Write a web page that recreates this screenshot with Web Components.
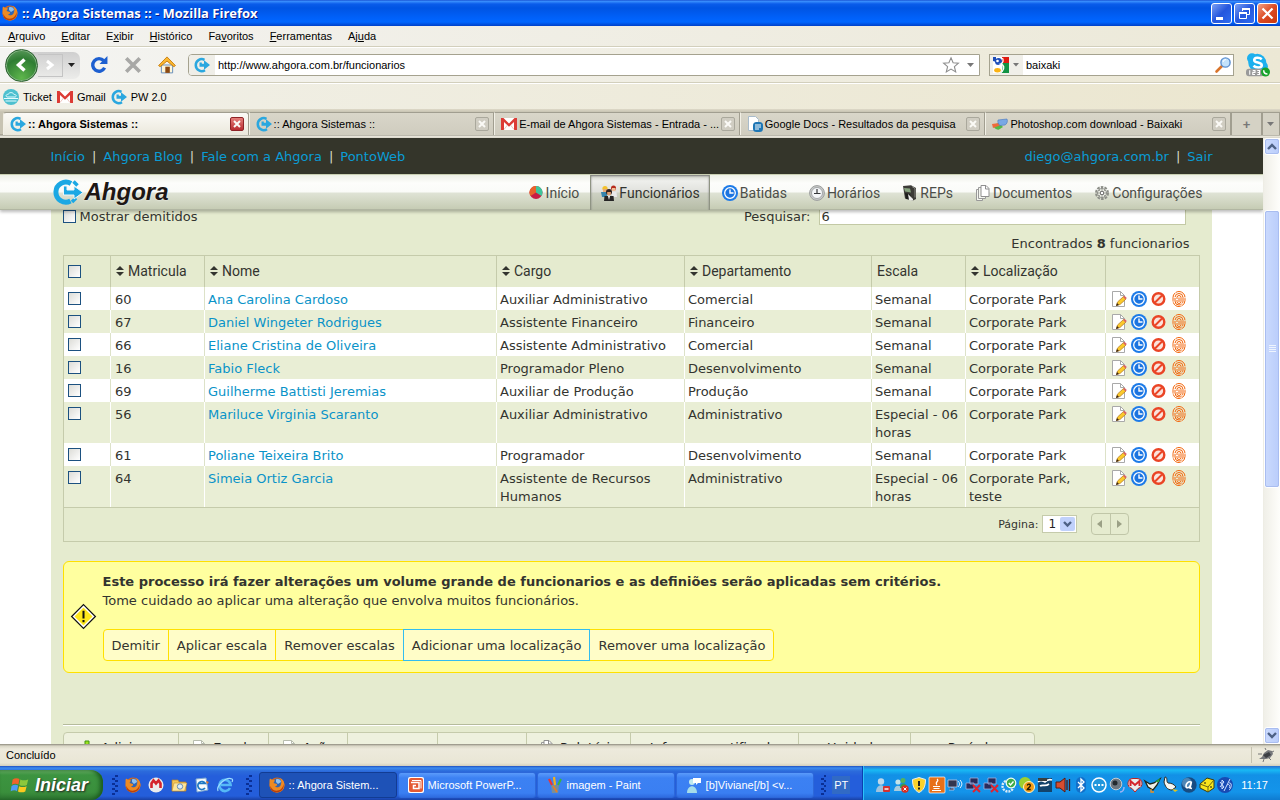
<!DOCTYPE html>
<html lang="pt-BR">
<head>
<meta charset="utf-8">
<title>:: Ahgora Sistemas ::</title>
<style>
html,body{height:100%;margin:0}
body{overflow:hidden;font-family:"Liberation Sans",Arial,sans-serif;font-size:11px;color:#000}
</style>
</head>
<body>
<desktop-screen></desktop-screen>
<script>
const ICONS = {
firefox:`<circle cx="8" cy="8" r="7.500" fill="#d9661a"/><circle cx="8.500" cy="6" r="4.600" fill="#2f66b5"/><path d="M7 2.500c2-1 5 0 5 2.500l-3 2-2-2z" fill="#8fc1ee"/><path d="M1 1.500c1.500 1.500 3 1 5 2L4.500 6 8 7c.5 2-1 2-2 2.500 2 2 5.500 1 6-2.500C13 4.500 12 2.500 10.500 1c3.500 1 5 4 4.900 7.300C15.200 12.500 12 15.500 8 15.500S.600 12.500.600 8C.600 5 .300 3 1 1.500z" fill="#ee8a22"/><path d="M1.500 9c1 4 5 5.500 8.500 4.300 2-.7 4.500-3.500 4.500-6.300 1 4-2 8.300-6.500 8.300S.500 12.500 1.500 9z" fill="#b9400d"/>`,
ahgora:`<path d="M11 13.200A6 6 0 1 1 10.500 2.800" fill="none" stroke="#2aa7df" stroke-width="2.500"/><path d="M5.500 5.500v4.300H10v3l6-4.800-6-4.800v3.500H7.800V5.500z" fill="#2aa7df"/>`,
ticket:`<circle cx="8" cy="8" r="8" fill="#4dc0cf"/><path d="M4 8c-2-1-.5-3 1.200-2.600C6 3 10 3 11 5.500c2-.3 3 1.500 1.300 2.500zM1 9.500h14M2.500 12h11" fill="none" stroke="#e4fbff" stroke-width="1"/>`,
gmail:`<path d="M0 2h16v12H0z" fill="#fff"/><path d="M0 14V2h2.500L8 7.500 13.500 2H16v12h-3V6L8 10.800 3 6v8z" fill="#dc3b35"/><path d="M3 13.500L6.500 9M13 13.500L9.500 9" stroke="#e8aaa4" stroke-width=".7"/>`,
docs:`<path d="M1.500.5h7l3 3v11h-10z" fill="#fff" stroke="#a9bccb"/><rect x="6" y="6" width="10" height="10" rx="3.500" fill="#1d76b5"/><path d="M8 9h6M8 11h6M8 13h4" stroke="#fff"/>`,
baixaki:`<path d="M1 9l6-2 4 4-4 2.500c-2 .8-5-1-6-4.500z" fill="#54b948"/><path d="M0 8l7-1 2 2-8 3z" fill="#ef6a3a"/><path d="M6 4l9-1c1 2 0 5-2 6l-5 .5C6 8 5.500 6 6 4z" fill="#79a8e4" stroke="#4877c0" stroke-width=".6"/>`,
reload:`<path d="M13 10.500A5.600 5.600 0 1 1 12.200 4.200" fill="none" stroke="#1d5fd0" stroke-width="3"/><path d="M15.500 0v7H8.500l2.500-2.500z" fill="#1d5fd0"/>`,
stop:`<path d="M2 2l12 12M14 2L2 14" stroke="#a8a8a6" stroke-width="3.200"/>`,
home:`<path d="M3 8h10v7H3z" fill="#fff6d8" stroke="#5b87b8" stroke-width=".8"/><path d="M6.500 9.500h4V15h-4z" fill="#8c4a12"/><path d="M8 .8l7.500 7.700-1.400 1L8 4.500 1.900 9.500.5 8.500z" fill="#fcb830" stroke="#c47a0c" stroke-width=".8"/>`,
star:`<path d="M8 .8l2.100 5 5.300.4-4 3.500 1.300 5.200L8 12.100l-4.700 2.800 1.300-5.200-4-3.500 5.300-.4z" fill="#fff" stroke="#8e8e8e" stroke-width="1.100"/>`,
google:`<path d="M0 0h16v16H0z" fill="#fff"/><path d="M9 0h7v6H9z" fill="#e01a10"/><path d="M9 6h7v10H7c3-2 3-6 2-10z" fill="#129344"/><path d="M0 0h3v5L0 4z" fill="#1c4cb8"/><circle cx="5.500" cy="4.500" r="3.500" fill="#1c4cb8"/><circle cx="4.500" cy="4" r="1.300" fill="#fff"/><path d="M9.500 1c1 2 1 5-2 6 4 1 4 4 2 7l-2 2" fill="none" stroke="#fff" stroke-width="1.300"/><ellipse cx="4.500" cy="13.300" rx="3.300" ry="2.200" fill="#fbb314"/>`,
lens:`<path d="M1.500 14.500L7 9" stroke="#d9742b" stroke-width="2.600" stroke-linecap="round"/><circle cx="10.500" cy="5.500" r="4.600" fill="#c3e2fb" stroke="#5b8fd0" stroke-width="1.400"/><path d="M8 5a3 3 0 0 1 3-2.500" stroke="#fff" fill="none"/>`,
skype:`<circle cx="7.500" cy="6.500" r="6" fill="#1db0ee"/><circle cx="4" cy="3.500" r="3.300" fill="#1db0ee"/><circle cx="11" cy="9" r="3.600" fill="#1db0ee"/><path d="M10.500 4.200C9 2.800 5.500 2.800 5.500 4.800c0 2 5 1.200 5 3.300 0 1.900-3.800 2-5.500.4" fill="none" stroke="#fff" stroke-width="1.700"/><rect x="0" y="10.500" width="12" height="5" rx="2" fill="#9a9a9a"/><path d="M2.500 11.500v3M4.500 11.700h1.500v1.200H4.500v1.400H6M7.500 11.700H9v2.600H7.500M7.700 13H9" stroke="#fff" stroke-width=".7" fill="none"/><circle cx="13" cy="12.700" r="3" fill="#18a22b"/><path d="M11.800 11.500c0 1.500 1 2.500 2.500 2.500" stroke="#fff" fill="none"/>`,
pie:`<circle cx="8" cy="7.500" r="6.500" fill="#c81d45"/><path d="M8 7.500V1A6.500 6.500 0 0 0 2.500 11z" fill="#e8622a"/><path d="M8 7.500V1a6.500 6.500 0 0 1 5.500 10z" fill="#3fc49a"/>`,
people:`<circle cx="4" cy="3.500" r="2.600" fill="#f3c12c"/><path d="M2 4h4v3H2z" fill="#e8a87a"/><path d="M0 7h6v5H1z" fill="#3585ae"/><circle cx="12.500" cy="3" r="2.500" fill="#b62b1c"/><path d="M11 3h3.500v3H11z" fill="#f0bd95"/><path d="M10 7h5.500l.5 5h-5z" fill="#e9e9e9"/><circle cx="8" cy="7" r="3" fill="#32221c"/><path d="M6.200 7h3.700v3H6.200z" fill="#dd9e72"/><path d="M3.500 11h9l.5 5H3z" fill="#252525"/><path d="M7 11h2l-1 4z" fill="#fff"/>`,
clock:`<circle cx="8" cy="8" r="8" fill="#1d7be8"/><circle cx="8" cy="8" r="5.300" fill="#1b74e0" stroke="#fff" stroke-width="1.300"/><path d="M8 4.500V8h3.500" fill="none" stroke="#fff" stroke-width="1.400"/>`,
watch:`<circle cx="8" cy="8" r="7.400" fill="#c9cbca" stroke="#9b9d9d"/><circle cx="8" cy="8" r="5.500" fill="#f4f6f8" stroke="#96999c" stroke-width=".8"/><path d="M8 4v4.500h3.500M5 8.500h3" fill="none" stroke="#35383b" stroke-width="1.200"/>`,
rep:`<path d="M1 1l8-.7L14 3v11l-3 1.500-8-2z" fill="#3c3b37"/><path d="M2 3l6 .5 1 4-6-1z" fill="#87a37f"/><path d="M3 8l5 1 2 6-6-1z" fill="#1c1c1b"/><path d="M6 9l5 5v1.500L7 15z" fill="#eee"/><path d="M10 1.500l3 2v9" stroke="#8b8b85" fill="none"/>`,
pages:`<path d="M1.500 4.500h6v11h-6z" fill="#f4f6ef" stroke="#999"/><path d="M3.500 2.500h7v11h-7z" fill="#f4f6ef" stroke="#999"/><path d="M6 .5h5l3 3v8H6z" fill="#fff" stroke="#8f8f8f"/><path d="M10.500.5v3.500H14" fill="none" stroke="#8f8f8f"/>`,
gear:`<circle cx="8" cy="8" r="6" fill="none" stroke="#8d8f88" stroke-width="2" stroke-dasharray="2.600 1.160"/><circle cx="8" cy="8" r="4.500" fill="#eef0e8" stroke="#8b8d87"/><path d="M8 3.500v9M3.500 8h9M5 5l6 6M11 5l-6 6" stroke="#8b8d86" stroke-width=".8"/><circle cx="8" cy="8" r="1.700" fill="#fff" stroke="#777"/>`,
edit:`<path d="M1.500.5h8l4 4v11h-12z" fill="#fff" stroke="#a9a9a9"/><path d="M9.500.5v4h4" fill="none" stroke="#a9a9a9"/><path d="M6.500 11l6-5.500L15 8l-6 5.500-3.500 1z" fill="#fbc92b" stroke="#ad751c" stroke-width=".7"/><path d="M12 6l1.500-1.300L15.800 7l-1.300 1.500z" fill="#d96464"/><path d="M5 15l1-3 2 2z" fill="#382412"/>`,
ban:`<circle cx="7.500" cy="8" r="5.800" fill="#fbe3dc" stroke="#ea4425" stroke-width="2.400"/><path d="M4 11.500l7-7" stroke="#ea4425" stroke-width="2"/>`,
finger:`<g fill="none" stroke="#f2650a" stroke-width="1"><rect x="2" y=".5" width="12" height="15" rx="6" stroke-dasharray="9 .8"/><rect x="4" y="2.500" width="8" height="11.500" rx="4" stroke-dasharray="12 .9"/><rect x="6" y="4.500" width="4" height="8" rx="2" stroke-dasharray="14 1"/><path d="M8 6.500v4.500"/></g>`,
warning:`<path d="M8 .4L15.600 8 8 15.600.4 8z" fill="#fff" stroke="#111" stroke-width=".8"/><path d="M8 2.200L13.800 8 8 13.800 2.200 8z" fill="#ffe81c"/><path d="M8 4.300v5M8 10.200v1.400" stroke="#111" stroke-width="1.300"/>`,
plus:`<path d="M6 1h4v5h5v4h-5v5H6v-5H1V6h5z" fill="#9be21c" stroke="#3f9410"/>`,
sheet:`<path d="M2.500.5h8l3 3v12h-11z" fill="#fff" stroke="#b7bcae"/><path d="M10.500.5v3h3" stroke="#b7bcae" fill="none"/>`,
bug:`<path d="M1 12l3-2 2-4 4-3 4 1 1 3-3 4-4 1z" fill="#75777a"/><path d="M5 8l6-3 2 3-5 3z" fill="#3c3f43"/><path d="M0 7h4M6 12l-1 3M11 11l2 2M14 5l2-1M8 3l-1-2" stroke="#777"/>`,
windows:`<path d="M1.500 3C3.500 1.500 6 1.700 7.500 2.700L6.600 7.500C5 6.500 2.500 6.500.700 7.800z" fill="#f0632a"/><path d="M8.300 3c2 1 4 1 7 0l-1.200 5c-2 1-4.500 1-6.700 0z" fill="#8cc83c"/><path d="M.5 8.800c2-1.200 4-1.200 5.800-.3l-1 5C4 12.500 2 12.500-.3 13.600z" fill="#4f9bf5"/><path d="M7.200 9c2 1 4.500 1 6.700 0l-1.200 4.800c-2 1-4.700 1-6.500 0z" fill="#fbc91f"/>`,
gmailnote:`<circle cx="8" cy="8" r="7.500" fill="#ececec"/><path d="M3.500 11V6.500l2-3 2.500 3 2.500-3 2 3V11" fill="none" stroke="#d4242c" stroke-width="2.600"/>`,
folder:`<path d="M1 3h6l1 2h7v9H1z" fill="#f5c756" stroke="#b9822a" stroke-width=".7"/><path d="M3 6h13l-2.500 8H1z" fill="#fde69b" stroke="#b9822a" stroke-width=".5"/><circle cx="9" cy="9.500" r="2.700" fill="#dceffd" stroke="#6a8cb2"/>`,
mail:`<path d="M2 2l10-1 2 12-11 2z" fill="#f6f9fc" stroke="#7ca6cf"/><path d="M11 11a4 4 0 1 1 .3-4.500H5" fill="none" stroke="#1d77c4" stroke-width="1.700"/><path d="M12 4l3 1-2 2z" fill="#f07a1e"/>`,
ie:`<path d="M13 11a5.600 5.600 0 1 1 .6-3H4" fill="none" stroke="#55b8f6" stroke-width="2.700"/><path d="M1 14C-1 9 9-1 15 2c1 .5.5 2 0 3" fill="none" stroke="#9bdcff" stroke-width="1.200"/>`,
ppt:`<rect width="16" height="16" rx="2" fill="#fff"/><rect x="1" y="1" width="14" height="14" rx="2" fill="#e45a33"/><path d="M3 5.500h8v6H5.500v-3H8" fill="none" stroke="#fff" stroke-width="1.500"/><path d="M4 3.500h9v8" fill="none" stroke="#fff"/>`,
paint:`<path d="M4 8h8l-1 8H5z" fill="#7a8f98"/><path d="M5 8L2 2" stroke="#e33" stroke-width="2.200"/><path d="M8 8L7 0" stroke="#f5b21a" stroke-width="2.200"/><path d="M11 8l3-6" stroke="#38b443" stroke-width="2"/><path d="M6 9l4 6" stroke="#ef7c20" stroke-width="1.500"/>`,
msn:`<circle cx="6" cy="5" r="3" fill="#bfe9ef"/><path d="M1 16c0-9 10-9 10 0z" fill="#a6dce9"/><path d="M7 1h8v5h-3l-2 2V6H7z" fill="#fff"/>`,
msnaway:`<circle cx="6" cy="4.500" r="3.200" fill="#bfd8ea"/><path d="M1 15c0-9 10-9 10 0z" fill="#9fc3de"/><rect x="8" y="9" width="7" height="6" rx="1" fill="#d23232"/><path d="M9.500 12h4" stroke="#fff" stroke-width="1.400"/>`,
buddies:`<circle cx="5" cy="5" r="2.600" fill="#c5e3e8"/><circle cx="10" cy="3.500" r="2.500" fill="#54b35c"/><path d="M1 14c0-7 8-7 8 0z" fill="#a9ccdd"/><path d="M7 11c0-6 7-6 7 0z" fill="#3b9a50"/><circle cx="12" cy="12" r="3.700" fill="#db2c1f"/><path d="M10.500 10.500l3 3M13.500 10.500l-3 3" stroke="#fff"/>`,
shield:`<path d="M8 .5l6.500 2c0 7-2 11-6.500 13C3.500 13.500 1.500 9.500 1.500 2.500z" fill="#fbd22b" stroke="#e9eef3"/><path d="M8 4v5M8 10.500v2" stroke="#222" stroke-width="2"/>`,
java:`<rect width="16" height="16" rx="1" fill="#e77018" stroke="#fff" stroke-width=".7"/><path d="M8 2c3 2-3 3 0 6M4 9.500h7M4.500 11.500h6M3 13.500h9" fill="none" stroke="#fff" stroke-width="1.200"/>`,
wifi:`<path d="M1 3h9v7H1zM4 11h3v2H2" fill="#33364d" stroke="#c0c6e1" stroke-width=".8"/><path d="M11 4c2 2 2 4 0 6M13 3c2.500 3 2.500 5 0 8" fill="none" stroke="#e5f3ff"/>`,
netoff:`<path d="M5 1h8v6H5zM1 6h8v6H1z" fill="#292c5b" stroke="#9fb0e0" stroke-width=".8"/><path d="M8 8l7 7M15 8l-7 7" stroke="#e02330" stroke-width="2"/>`,
cert:`<circle cx="7" cy="9" r="5.500" fill="none" stroke="#dcecf7" stroke-width="2.400" stroke-dasharray="2 1"/><circle cx="10" cy="6" r="4.800" fill="#3eac49" stroke="#f3fff3" stroke-width="1.200"/><path d="M7.800 6l1.700 2 3-3.500" fill="none" stroke="#fff" stroke-width="1.400"/>`,
two:`<circle cx="6" cy="6" r="6" fill="#9ed02e"/><circle cx="10" cy="10" r="5.500" fill="#f19c16" stroke="#fff3c6"/><path d="M8.300 8.500c.4-2 3.400-1.500 3 .4-.2 1-2.500 2.500-3 3.600h3.400" fill="none" stroke="#261b00" stroke-width="1.300"/>`,
oo:`<path d="M1 1h14v14H1z" fill="#13436b"/><path d="M1 5c3-3 5-1 7 0 2-2 4-3 7-2M3 9c3-2 5 1 9-2" stroke="#fff" fill="none" stroke-width="1.700"/><path d="M1 1h9v3H1z" fill="#3a3f3f"/>`,
sound:`<path d="M1 5h4l5-4v14l-5-4H1z" fill="#d64d30" stroke="#591b12"/><path d="M12 3v10M14.500 2v12" stroke="#4b1712" stroke-width="1.300"/>`,
bt:`<rect x="3" y="0" width="10" height="16" rx="5" fill="#1270ca"/><path d="M5 5l6 6-3 3V2l3 3-6 6" fill="none" stroke="#fff" stroke-width="1.300"/>`,
dots:`<circle cx="8" cy="8" r="7" fill="#2297dc" stroke="#fff" stroke-width="1.500"/><path d="M3.500 8h2M7 8h2M10.500 8h2" stroke="#fff" stroke-width="2"/>`,
speaker:`<circle cx="7" cy="7" r="5.800" fill="#6e7780" stroke="#c5ccd2"/><circle cx="6" cy="6" r="2.500" fill="#242a2f"/><path d="M11 15c3 0 4-3 4-5" fill="none" stroke="#9fb2f1" stroke-width="1.500"/>`,
bubble:`<path d="M8 15L5 11.500C-1 10 0 1.500 6 1.500h4c6 0 7 8.500 1 10z" fill="#ececec" stroke="#b22"/><path d="M3.500 9V4l4.500 4 4.500-4v5" fill="none" stroke="#d4242c" stroke-width="2"/>`,
bird:`<path d="M0 4l5 3 4-1 6-4-3 6-4 5-5-3z" fill="#eef0e8" stroke="#1c251b" stroke-width="1.300"/><path d="M10 5l5-4-1 4z" fill="#25a342"/><path d="M6 12v3l3 0" stroke="#f18f1d" fill="none" stroke-width="1.300"/>`,
goose:`<path d="M2 0c3 0 1 5 3 6 3 0 6 1 8 4l-4 3C4 13 2 9 1 5z" fill="#f5f6f2" stroke="#2a2a25"/><path d="M9 12l6 1-3 2z" fill="#e1c41b"/>`,
avast:`<circle cx="8" cy="8" r="7.700" fill="#174c82"/><circle cx="6" cy="6" r="5" fill="#4d86b6"/><path d="M10 5c-3-1-5 2-5 4s3 3 4.500-1L10.500 4.500 9 11l2 .5" fill="none" stroke="#fff" stroke-width="1.600"/>`,
cheese:`<path d="M1 7l7-6 7 2v8l-6 4-8-4z" fill="#f8e51c" stroke="#3d3a12"/><path d="M1 7l8 3 6-7M9 10v5" fill="none" stroke="#6b6512"/><circle cx="6" cy="6" r="1" fill="#655c12"/><circle cx="12" cy="10" r="1" fill="#655c12"/>`,
btw:`<circle cx="8" cy="8" r="8" fill="#174ab4"/><path d="M3 5l4 5-2 2V3l2 2-4 5M13 2L7 14M10 8c2-2 4 2 2 3M12 6c3-1 3 5 0 7" fill="none" stroke="#cfe0ff"/>`
};

function define(name, css, html) {
  const tpl = document.createElement('template');
  tpl.innerHTML = `<style>*{box-sizing:border-box}${css}</style>${html}`;
  customElements.define(name, class extends HTMLElement {
    constructor() {
      super();
      this.attachShadow({mode: 'open'}).append(tpl.content.cloneNode(true));
    }
  });
}

customElements.define('ui-icon', class extends HTMLElement {
  connectedCallback() {
    if (this.shadowRoot) return;
    const s = this.getAttribute('size') || 16;
    this.attachShadow({mode: 'open'}).innerHTML =
      `<style>:host{display:inline-block;flex:none;width:${s}px;height:${s}px}svg{display:block;width:100%;height:100%;overflow:visible}</style>
       <svg viewBox="0 0 16 16" aria-hidden="true">${ICONS[this.getAttribute('name')] || ''}</svg>`;
  }
});

/* ---------- window frame ---------- */
define('title-bar', `
:host{display:flex;align-items:center;height:26px;padding:0 2px 0 2px;gap:4px;
 background:linear-gradient(#0a3cc4 0,#3f94ff 1px,#0a5cea 4px,#0054e3 8px,#0061fa 18px,#0066ff 22px,#0040c8 26px);
 color:#fff;font:bold 13px "Open Sans","Liberation Sans",sans-serif;text-shadow:1px 1px #0a1883}
.t{flex:1;white-space:pre}
.b{display:flex;gap:2px}
button{width:21px;height:21px;padding:0;border:1px solid #fff;border-radius:3px;background:linear-gradient(135deg,#7ba0f4,#2456dd 50%,#2f6cf0)}
button.x{background:linear-gradient(135deg,#f0a085,#dc4a22 50%,#c8370e)}
svg{display:block;width:19px;height:19px}`,
`<ui-icon name="firefox"></ui-icon><span class="t">:: Ahgora Sistemas :: - Mozilla Firefox</span>
<span class="b">
<button aria-label="Minimizar"><svg><path d="M4 13h7v3H4z" fill="#fff"/></svg></button>
<button aria-label="Restaurar"><svg fill="none" stroke="#fff"><path d="M7.500 7V4.500h7v6H12"/><path d="M7 5h8" stroke-width="2"/><path d="M4.500 8.500h7v6h-7z"/><path d="M4 9h8" stroke-width="2"/></svg></button>
<button class="x" aria-label="Fechar"><svg><path d="M4.500 4.500l10 10M14.500 4.500l-10 10" stroke="#fff" stroke-width="2.200"/></svg></button>
</span>`);

define('menu-bar', `
:host{display:flex;align-items:center;gap:16px;height:21px;padding:0 8px;background:linear-gradient(90deg,#f3f2ef,#ece9d8);border-bottom:1px solid #d2cfbc}
a{color:#000;text-decoration:none}`,
`<a href="#"><u>A</u>rquivo</a><a href="#"><u>E</u>ditar</a><a href="#">E<u>x</u>ibir</a><a href="#"><u>H</u>istórico</a><a href="#">Fa<u>v</u>oritos</a><a href="#"><u>F</u>erramentas</a><a href="#">Aj<u>u</u>da</a>`);

define('nav-toolbar', `
:host{display:flex;align-items:center;height:36px;padding:0 10px 0 5px;background:linear-gradient(90deg,#f4f4f2,#ece8d5);border-top:1px solid #fff;border-bottom:1px solid #d2cfbc}
button{padding:0;border:0;background:none;display:flex;align-items:center;justify-content:center;flex:none}
.hist{display:flex;align-items:center;height:27px;width:75px;border-radius:16px 8px 8px 16px;background:linear-gradient(#cfcfcf,#ececea)}
.back{width:33px;height:33px;border-radius:50%;background:radial-gradient(circle at 50% 90%,#5eb64c,#2f7d33 60%,#68a268);border:1px solid #2c6130;box-shadow:inset 0 0 0 1px #86b486}
.fwd{width:25px;height:23px;border:1px solid #c4c4c4;border-left:0}
.drop{flex:1}
.tools{display:flex;gap:16px;margin:0 12px 0 10px}
.url{flex:1;display:flex;align-items:center;height:22px;border:1px solid #a5a28f;border-radius:4px 0 0 4px;background:#fff;overflow:hidden;padding-right:4px;gap:8px}
.id{display:flex;align-items:center;justify-content:center;align-self:stretch;width:26px;background:#efeee8}
input{flex:1;min-width:0;width:0;height:20px;border:0;padding:0;outline:0;background:transparent;font:inherit;font-size:11px;color:#000}
.url input{margin-left:-5px}
.search{display:flex;align-items:center;width:245px;height:22px;margin:0 12px 0 9px;border:1px solid #a5a28f;background:#fff;gap:3px;padding-right:2px}
.eng{width:33px;align-self:stretch;background:#f0efe9;gap:4px}`,
`<div class="hist"><button class="back" aria-label="Voltar"><svg width="18" height="18"><path d="M11.500 3.500L5.500 9l6 5.500" fill="none" stroke="#fff" stroke-width="3.500"/></svg></button>
<button class="fwd" aria-label="Avançar"><svg width="14" height="14"><path d="M4 3l5 4-5 4" fill="none" stroke="#fff" stroke-width="3"/></svg></button>
<button class="drop" aria-label="Histórico recente"><svg width="8" height="5"><path d="M0 0h7L3.500 4z" fill="#222"/></svg></button></div>
<div class="tools"><button aria-label="Atualizar"><ui-icon name="reload" size="18"></ui-icon></button><button aria-label="Parar"><ui-icon name="stop" size="18"></ui-icon></button><button aria-label="Página inicial"><ui-icon name="home" size="18"></ui-icon></button></div>
<div class="url"><span class="id"><ui-icon name="ahgora"></ui-icon></span><input aria-label="Endereço" value="http://www.ahgora.com.br/funcionarios">
<button aria-label="Favoritar"><ui-icon name="star"></ui-icon></button><button aria-label="Abrir lista"><svg width="8" height="5"><path d="M0 0h7L3.500 4z" fill="#777"/></svg></button></div>
<div class="search"><button class="eng" aria-label="Motor de busca"><ui-icon name="google"></ui-icon><svg width="7" height="4"><path d="M0 0h6L3 3.500z" fill="#777"/></svg></button><input aria-label="Buscar" value="baixaki"><button aria-label="Buscar"><ui-icon name="lens"></ui-icon></button></div>
<ui-icon name="skype" size="24"></ui-icon>`);

define('bookmark-bar', `
:host{display:flex;align-items:center;gap:5px;height:26px;padding:0 3px;background:linear-gradient(90deg,#f1f0e8,#ebe6cf);border-top:1px solid #fff}
a{display:flex;align-items:center;gap:4px;color:#000;text-decoration:none}`,
`<a href="#"><ui-icon name="ticket"></ui-icon>Ticket</a><a href="#"><ui-icon name="gmail"></ui-icon>Gmail</a><a href="#"><ui-icon name="ahgora"></ui-icon>PW 2.0</a>`);

define('browser-tab', `
:host{flex:1;min-width:0;display:flex;align-items:center;height:23px;padding:0 4px 0 6px;border:1px solid #a19e90;border-bottom:0;border-left-color:#f2f0e6;background:linear-gradient(#d9d6c9,#cfccbe)}
:host([active]){background:linear-gradient(#fbfaf6,#ebe8dc);font-weight:bold;border-radius:3px 3px 0 0}
.t{flex:1;min-width:0;white-space:nowrap;margin-left:2px}
button{flex:none;width:14px;height:14px;padding:0;border:1px solid #aaa89c;border-radius:2px;background:#d0cdc2;display:flex;align-items:center;justify-content:center}
path{stroke:#fbfaf6;stroke-width:2}
:host([active]) button{background:linear-gradient(#e57f7b,#b92b30);border-color:#8f2226}`,
`<slot name="icon"></slot><span class="t"><slot></slot></span><button aria-label="Fechar aba"><svg width="8" height="8"><path d="M1 1l6 6M7 1L1 7"/></svg></button>`);

define('tab-strip', `
:host{display:flex;align-items:flex-end;height:29px;padding:0 0 3px 3px;background:linear-gradient(#ded9c8,#c7c3b2 3px,#c7c3b2 25px,#8b887b 26px,#eceadf 27px,#d8d5c8)}
button{height:23px;padding:0;border:1px solid #a19e90;border-bottom:0;background:#d5d2c5;width:31px;color:#777;font:bold 13px "Liberation Sans",sans-serif;display:flex;align-items:center;justify-content:center}
button:last-child{width:18px}`,
`<browser-tab active><ui-icon slot="icon" name="ahgora"></ui-icon>:: Ahgora Sistemas ::</browser-tab>
<browser-tab><ui-icon slot="icon" name="ahgora"></ui-icon>:: Ahgora Sistemas ::</browser-tab>
<browser-tab><ui-icon slot="icon" name="gmail"></ui-icon>E-mail de Ahgora Sistemas - Entrada - ...</browser-tab>
<browser-tab><ui-icon slot="icon" name="docs"></ui-icon>Google Docs - Resultados da pesquisa</browser-tab>
<browser-tab><ui-icon slot="icon" name="baixaki"></ui-icon>Photoshop.com download - Baixaki</browser-tab>
<button aria-label="Nova aba">+</button><button aria-label="Listar abas"><svg width="8" height="4"><path d="M0 0h7L3.500 4z" fill="#777"/></svg></button>`);

define('scroll-bar', `
:host{display:flex;flex-direction:column;width:17px;background:linear-gradient(90deg,#f0efe8,#fefefb);border-left:1px solid #eeede5}
button,.thumb{border:1px solid #fff;border-radius:3px;outline:1px solid #a9bdf0;outline-offset:-2px;background:linear-gradient(90deg,#cbdafd,#bacdfb);padding:0;display:flex;align-items:center;justify-content:center}
button{height:17px}
.gap{flex:55}.rest{flex:240}.thumb{flex:277}`,
`<button aria-label="Rolar para cima"><svg width="10" height="7"><path d="M1 6l4-4 4 4" fill="none" stroke="#4d6185" stroke-width="2.400"/></svg></button><div class="gap"></div>
<div class="thumb"><svg width="7" height="8"><path d="M0 .5h7M0 2.500h7M0 4.500h7M0 6.500h7" stroke="#eef4fe"/></svg></div><div class="rest"></div>
<button aria-label="Rolar para baixo"><svg width="10" height="7"><path d="M1 1l4 4 4-4" fill="none" stroke="#4d6185" stroke-width="2.400"/></svg></button>`);

/* ---------- site ---------- */
define('site-top', `
:host{display:flex;justify-content:space-between;align-items:center;height:36px;padding:0 4%;background:#34352a;color:#d8d9c8}
nav{display:flex;gap:7px}
a{color:#0a9cd4;text-decoration:none}`,
`<nav><a href="#">Início</a>|<a href="#">Ahgora Blog</a>|<a href="#">Fale com a Ahgora</a>|<a href="#">PontoWeb</a></nav>
<nav><a href="#">diego@ahgora.com.br</a>|<a href="#">Sair</a></nav>`);

define('nav-item', `
:host{display:block}
a{display:flex;align-items:center;gap:2px;height:35px;padding:0 9px 0 10px;border:1px solid transparent;border-width:0 1px;color:#4c4e48;text-decoration:none;font-family:"Roboto","Liberation Sans",sans-serif;font-size:14px}
:host([active]) a{color:#33342f;border-color:#8f9484;background:linear-gradient(#cdd0c5 0,#eeefec 6px,#e0e1dc 17px,#cdd1c3 18px,#b6bca6);box-shadow:inset 0 1px 2px #777}`,
`<a href="#"><slot></slot></a>`);

define('site-header', `
:host{display:flex;justify-content:space-between;height:36px;padding:0 4%;border-top:1px solid #c9cfb2;border-bottom:1px solid #b1b6a2;
 background:linear-gradient(#edf0e6,#fdfdfb 8px,#fafbf8 17px,#dfe3d5 18px,#c6ccb4);box-shadow:0 2px 3px #0004;position:relative;z-index:1}
.logo{display:flex;align-items:center;gap:2px;color:#1d1715;text-decoration:none;font:italic bold 24px "Liberation Sans",sans-serif;text-shadow:0 0 2px #fff}
nav{display:flex;gap:1px}`,
`<a class="logo" href="#"><svg width="32" height="30" viewBox="0 0 32 30"><path d="M20 6.500A10 10 0 1 0 19.500 24" fill="none" stroke="#1ba8e4" stroke-width="5"/><path d="M22.500 4.500l4 4M25 21l-4 4" stroke="#1ba8e4" stroke-width="3.500"/><path d="M12.500 9h3.500v4h7V9l9 6.500-9 6.500v-4H12.500z" fill="#1ba8e4" stroke="#eef6f9" stroke-width="1"/></svg><span>Ahgora</span></a>
<nav><nav-item><ui-icon name="pie"></ui-icon>Início</nav-item><nav-item active><ui-icon name="people"></ui-icon>Funcionários</nav-item><nav-item><ui-icon name="clock"></ui-icon>Batidas</nav-item><nav-item><ui-icon name="watch"></ui-icon>Horários</nav-item><nav-item><ui-icon name="rep"></ui-icon>REPs</nav-item><nav-item><ui-icon name="pages"></ui-icon>Documentos</nav-item><nav-item><ui-icon name="gear"></ui-icon>Configurações</nav-item></nav>`);

const CHECK = `input[type=checkbox]{appearance:none;display:block;flex:none;width:13px;height:13px;margin:0;border:1px solid #1c5180;background:linear-gradient(135deg,#dcdcd7,#fff)}`;

define('filter-bar', `
:host{display:flex;justify-content:space-between;height:20px;padding-right:14px}
label{display:flex;align-items:center;gap:4px}
.s{gap:9px}
${CHECK}
input[type=text]{width:367px;height:18px;border:1px solid #c3c9a5;background:#fff;padding:0 1px;font:inherit;color:#33342f}`,
`<label><input type="checkbox">Mostrar demitidos</label><label class="s">Pesquisar:<input type="text" value="6"></label>`);

const STAFF = [
 [60,'Ana Carolina Cardoso','Auxiliar Administrativo','Comercial','Semanal','Corporate Park'],
 [67,'Daniel Wingeter Rodrigues','Assistente Financeiro','Financeiro','Semanal','Corporate Park'],
 [66,'Eliane Cristina de Oliveira','Assistente Administrativo','Comercial','Semanal','Corporate Park'],
 [16,'Fabio Fleck','Programador Pleno','Desenvolvimento','Semanal','Corporate Park'],
 [69,'Guilherme Battisti Jeremias','Auxiliar de Produção','Produção','Semanal','Corporate Park'],
 [56,'Mariluce Virginia Scaranto','Auxiliar Administrativo','Administrativo','Especial - 06 horas','Corporate Park'],
 [61,'Poliane Teixeira Brito','Programador','Desenvolvimento','Semanal','Corporate Park'],
 [64,'Simeia Ortiz Garcia','Assistente de Recursos Humanos','Administrativo','Especial - 06 horas','Corporate Park, teste']
];
const SORT = `<svg width="8" height="10"><path d="M4 0l4 4H0zM4 10L0 6h8z" fill="#33342f"/></svg>`;
const head = (t, s) => `<th><span>${s ? SORT : ''}${t}</span></th>`;
const rows = STAFF.map(([id, name, ...rest]) => `<tr><td><input type="checkbox" aria-label="Selecionar ${name}"></td><td>${id}</td><td><a href="#">${name}</a></td>${rest.map(v => `<td>${v}</td>`).join('')}
<td class="act"><span><ui-icon name="edit"></ui-icon><ui-icon name="clock"></ui-icon><ui-icon name="ban"></ui-icon><ui-icon name="finger"></ui-icon></span></td></tr>`).join('');

define('staff-table', `
:host{display:block;border:1px solid #c5cbab;border-top:0}
table{width:100%;border-collapse:collapse;table-layout:fixed;line-height:18px}
th{height:31px;padding:0 4px 0 5px;border:1px solid #c5cbab;border-width:1px 0 0 1px;text-align:left;font:14px "Roboto","Liberation Sans",sans-serif}
th span{display:flex;align-items:center;gap:4px}
td{padding:4px 2px 1px 3px;vertical-align:top;border-left:1px solid #dde2c8}
td:nth-child(2){padding-left:4px}
tbody tr:nth-child(odd){background:#fff}
tbody tr:nth-child(even){background:#e9eed5}
tbody tr:nth-child(even) td{border-left-color:#fff}
tr>:first-child{border-left:0;padding-left:4px}
a{color:#0a93c8;text-decoration:none}
${CHECK}
td input[type=checkbox]{margin-top:1px}
.act span{display:flex;gap:4px;padding-left:2px}
footer{display:flex;align-items:center;height:34px;border-top:1px solid #c5cbab;padding-right:70px;justify-content:flex-end;gap:14px}
label{display:flex;align-items:center;gap:4px;font-size:11px}
.sel{display:flex;align-items:center;border:1px solid #c5cbab;background:#fff;width:35px;height:18px;position:relative}
select{appearance:none;width:100%;height:16px;border:0;padding:0 0 0 5px;background:none;font:12px "DejaVu Sans",sans-serif;color:#222}
.arr{position:absolute;right:1px;top:1px;width:15px;height:14px;pointer-events:none;background:#c0d1fb;border-radius:2px}
.pg{display:flex;border:1px solid #c0c6a8;border-radius:4px;height:22px;overflow:hidden}
.pg button{width:18px;border:0;padding:0 4px;background:none;display:flex;align-items:center}
.pg button+button{border-left:1px solid #c0c6a8}`,
`<table><colgroup><col style="width:47px"><col style="width:94px"><col><col style="width:188px"><col style="width:187px"><col style="width:94px"><col style="width:140px"><col style="width:94px"></colgroup>
<thead><tr><th><input type="checkbox" aria-label="Selecionar todos"></th>${head('Matricula',1)}${head('Nome',1)}${head('Cargo',1)}${head('Departamento',1)}${head('Escala')}${head('Localização',1)}<th></th></tr></thead><tbody>${rows}</tbody></table>
<footer><label>Página: <span class="sel"><select><option>1</option></select><svg class="arr" viewBox="0 0 15 14"><path d="M4 5l3.500 3.500L11 5" fill="none" stroke="#4d6185" stroke-width="2.400"/></svg></span></label>
<span class="pg"><button aria-label="Página anterior"><svg width="8" height="8"><path d="M6 0v8L1 4z" fill="#9ba086"/></svg></button><button aria-label="Próxima página"><svg width="8" height="8"><path d="M2 0v8l5-4z" fill="#9ba086"/></svg></button></span></footer>`);

define('bulk-warning', `
:host{display:flex;align-items:center;gap:7px;height:112px;padding:0 7px;background:#ffff9f;border:1px solid #ffe000;border-radius:6px}
p{margin:0;line-height:19px}
.g{display:flex;margin-top:19px}
button{height:32px;margin:0 0 0 -1px;padding:0 8px;border:1px solid #ffe000;background:#fffdc8;font:inherit;color:#33342f;white-space:nowrap}
button:first-child{margin:0;border-radius:4px 0 0 4px}button:last-child{border-radius:0 4px 4px 0}
.on{border-color:#31bdf0;position:relative;z-index:1}`,
`<ui-icon name="warning" size="25"></ui-icon><div><p><b>Este processo irá fazer alterações um volume grande de funcionarios e as definiões serão aplicadas sem critérios.</b></p><p>Tome cuidado ao aplicar uma alteração que envolva muitos funcionários.</p>
<div class="g"><button>Demitir</button><button>Aplicar escala</button><button>Remover escalas</button><button class="on">Adicionar uma localização</button><button>Remover uma localização</button></div></div>`);

define('action-row', `
:host{display:block;border-top:1px solid #b5bb9c;padding-top:7px;box-shadow:inset 0 1px #fff}
div{display:inline-flex;border:1px solid #c5cbab;border-radius:4px 4px 0 0;background:#eef1de;height:32px}
button{border:0;border-left:1px solid #c5cbab;background:none;padding:0;font:inherit;color:#222;display:flex;align-items:center;justify-content:center;gap:6px}
button:first-child{border:0}`,
`<div><button style="width:114px"><ui-icon name="plus"></ui-icon>Adicionar</button><button style="width:90px"><ui-icon name="sheet"></ui-icon>Escala</button><button style="width:79px"><ui-icon name="sheet"></ui-icon>Ação</button><button style="width:90px" aria-label="Importar"></button><button style="width:89px" aria-label="Exportar"></button><button style="width:104px"><ui-icon name="pages"></ui-icon>Relatório</button><button style="width:168px">Informar certificado</button><button style="width:112px">Unidade</button><button style="width:124px">Período</button></div>`);

define('site-page', `
:host{display:flex;min-height:0;background:#fff;overflow:hidden}
.page{flex:1;min-width:0;overflow:hidden;font-family:"DejaVu Sans",Verdana,sans-serif;font-size:13px;color:#33342f}
main{margin:0 4%;padding:0 12px 40px;background:#e5ebcf}
filter-bar{margin-top:-4px}
.found{margin:6px 11px 0 0;height:23px;line-height:24px;text-align:right}
bulk-warning{margin-top:19px}
action-row{margin-top:51px}`,
`<div class="page"><site-top></site-top><site-header></site-header><main><filter-bar></filter-bar><div class="found">Encontrados <b>8</b> funcionarios</div><staff-table></staff-table><bulk-warning></bulk-warning><action-row></action-row></main></div><scroll-bar></scroll-bar>`);

/* ---------- desktop bottom ---------- */
define('status-bar', `
:host{display:flex;justify-content:space-between;align-items:center;height:22px;padding:0 6px;background:linear-gradient(#8d8a7d,#d9d6c6 2px,#edeadc 5px,#e9e6d5 19px,#d2cfbd);}
span{padding-left:6px;border-left:1px solid #c5c2b0;display:flex}`,
`<output>Concluído</output><span><ui-icon name="bug"></ui-icon></span>`);

define('task-button', `
:host{display:block;width:139px}
button{display:flex;align-items:center;gap:4px;width:138px;height:26px;padding:0 9px;border:1px solid #2d68d9;border-radius:3px;background:linear-gradient(#5b9bfb,#3c81f3 5px,#3a7ff2 20px,#2f6ce0);color:#fff;font:inherit;white-space:nowrap}
:host([active]) button{background:#1e52b7;border-color:#123c93}`,
`<button><slot></slot></button>`);

define('task-bar', `
:host{display:flex;align-items:center;height:34px;padding-top:4px;background:linear-gradient(#1f4fbf 0,#3b8cf0 2px,#2c6bdb 5px,#245edb 10px,#245edb 30px,#1941a5);color:#fff}
.start{display:flex;align-items:center;gap:6px;width:110px;height:30px;padding:0 0 0 11px;border:0;border-radius:0 12px 12px 0;background:linear-gradient(#6fb76c,#3c9440 5px,#3a8f3c 22px,#2d7431);box-shadow:inset -3px 0 4px #1b5a1f;color:#fff;font:italic bold 18px "Liberation Sans",sans-serif;text-shadow:1px 1px 2px #222}
.grip{width:6px;height:20px;margin:0 6px;background:conic-gradient(#0a2f95 90deg,transparent 90deg 180deg,#0a2f95 180deg 270deg,transparent 270deg) 0 0/6px 5px}
.start+.grip{margin-left:9px}
.quick{display:flex;gap:7px;margin-left:1px}
.quick+.grip{margin:0 7px 0 13px}
.tasks{display:flex;align-items:center;flex:1}
.lang{padding:3px 2px;margin-right:12px;background:#316ac5}
.tray{display:flex;align-items:center;gap:2px;height:34px;margin-top:-4px;padding:4px 12px 0;border-left:1px solid #0c3fb0;background:linear-gradient(#2b6fd0,#19b9f4 4px,#1290e6 9px,#1494ea 26px,#0f7bd0);box-shadow:inset 1px 0 #2bc3fa}
time{margin-left:6px}`,
`<button class="start"><ui-icon name="windows" size="18"></ui-icon>Iniciar</button><span class="grip"></span>
<div class="quick"><ui-icon name="firefox"></ui-icon><ui-icon name="gmailnote"></ui-icon><ui-icon name="folder"></ui-icon><ui-icon name="mail"></ui-icon><ui-icon name="ie"></ui-icon></div><span class="grip"></span>
<div class="tasks"><task-button active><ui-icon name="firefox"></ui-icon>:: Ahgora Sistem...</task-button><task-button><ui-icon name="ppt"></ui-icon>Microsoft PowerP...</task-button><task-button><ui-icon name="paint"></ui-icon>imagem - Paint</task-button><task-button><ui-icon name="msn"></ui-icon>[b]Viviane[/b] &lt;v...</task-button></div>
<span class="grip"></span><span class="lang">PT</span>
<div class="tray">${['msnaway','buddies','shield','java','wifi','netoff','netoff','cert','two','oo','sound','bt','dots','speaker','bubble','bird','goose','avast','cheese','btw'].map(n => `<ui-icon name="${n}"></ui-icon>`).join('')}<time>11:17</time></div>`);

define('desktop-screen', `:host{display:flex;flex-direction:column;height:100vh;overflow:hidden}
title-bar,menu-bar,nav-toolbar,bookmark-bar,tab-strip,status-bar,task-bar{flex:none}
site-page{flex:1}`,
`<title-bar></title-bar><menu-bar></menu-bar><nav-toolbar></nav-toolbar><bookmark-bar></bookmark-bar><tab-strip></tab-strip><site-page></site-page><status-bar></status-bar><task-bar></task-bar>`);
</script>
</body>
</html>
